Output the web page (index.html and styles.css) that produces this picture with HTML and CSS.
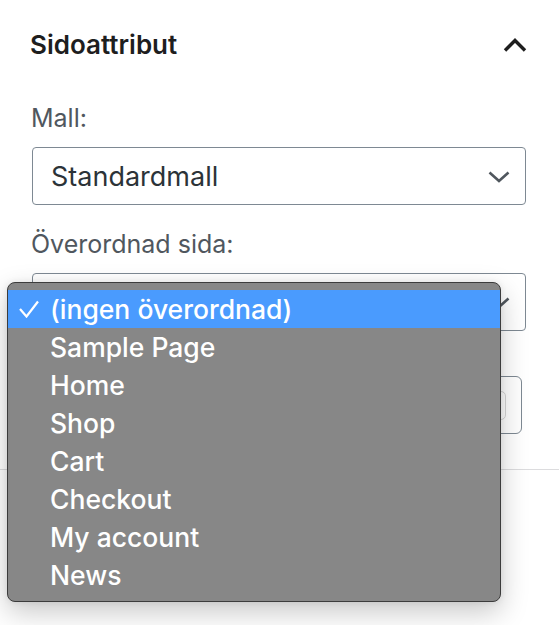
FILE: index.html
```html
<!DOCTYPE html>
<html lang="sv">
<head>
    <meta charset="UTF-8">
    <meta name="viewport" content="width=device-width, initial-scale=1.0">
    <title>Sidoattribut</title>
    <link rel="stylesheet" href="styles.css">
</head>
<body>
    <div class="panel">
        <div class="panel-header">
            <h2>Sidoattribut</h2>
            <svg class="toggle" width="24" height="16" viewBox="0 0 24 16">
                <polyline points="2,13.5 12,3.5 22,13.5" fill="none" stroke="#1e1e1e" stroke-width="3.4"/>
            </svg>
        </div>

        <label class="field-label">Mall:</label>
        <div class="select">
            <span>Standardmall</span>
            <svg class="arrow" width="22" height="12" viewBox="0 0 22 12">
                <polyline points="1.5,1.5 11,10 20.5,1.5" fill="none" stroke="#50575e" stroke-width="2.6"/>
            </svg>
        </div>

        <label class="field-label second">Överordnad sida:</label>
        <div class="select">
            <span></span>
            <svg class="arrow" width="22" height="12" viewBox="0 0 22 12">
                <polyline points="1.5,1.5 11,10 20.5,1.5" fill="none" stroke="#50575e" stroke-width="2.6"/>
            </svg>
        </div>

        <div class="number-input">
            <div class="spinner"></div>
        </div>
    </div>
    <div class="divider"></div>

    <!-- open native menu of the parent page select -->
    <ul class="menu">
        <li class="selected">
            <svg class="check" width="22" height="18" viewBox="0 0 22 18">
                <polyline points="2,9 8.5,16.5 20,1.5" fill="none" stroke="white" stroke-width="2.2"/>
            </svg>
            (ingen överordnad)
        </li>
        <li>Sample Page</li>
        <li>Home</li>
        <li>Shop</li>
        <li>Cart</li>
        <li>Checkout</li>
        <li>My account</li>
        <li>News</li>
    </ul>
</body>
</html>
```

FILE: styles.css
```css
body, html {
    margin: 0;
    background: white;
    font-family: Inter, 'Liberation Sans', sans-serif;
}
.panel {
    padding: 30px 33px 35px 30px;
}
.panel-header {
    display: flex;
    justify-content: space-between;
    align-items: center;
}
.panel-header h2 {
    margin: 0;
    font-size: 26px;
    line-height: 30px;
    font-weight: 600;
    color: #1e1e1e;
}
.toggle {
    margin-right: -1px;
    margin-top: -1px;
}
.field-label {
    display: block;
    margin-top: 43px;
    padding-left: 1px;
    font-size: 25px;
    line-height: 30px;
    color: #50575e;
}
.field-label.second {
    margin-top: 24px;
}
.select {
    margin: 14px 0 0 2px;
    height: 58px;
    box-sizing: border-box;
    border: 1px solid #7e8993;
    border-radius: 4px;
    display: flex;
    align-items: center;
    justify-content: space-between;
    padding: 0 15px 0 18px;
    font-size: 27px;
    color: #2c3338;
}
.arrow {
    margin-top: 1px;
}
.number-input {
    margin: 45px 4px 0 2px;
    height: 58px;
    box-sizing: border-box;
    border: 1.5px solid #7e8993;
    border-radius: 6px;
    display: flex;
    justify-content: flex-end;
    align-items: center;
    padding-right: 15px;
}
.spinner {
    width: 24px;
    height: 27px;
    border: 1px solid #d6d6d6;
    border-radius: 5px;
}
.divider {
    height: 1px;
    background: #dcdcde;
}
.menu {
    position: absolute;
    left: 7px;
    top: 282px;
    width: 494px;
    margin: 0;
    padding: 7px 0;
    box-sizing: border-box;
    list-style: none;
    background: #878787;
    border: 1px solid #3c3c3c;
    border-radius: 8px;
    box-shadow: 0 10px 28px rgba(0, 0, 0, 0.22), 0 0 6px rgba(0, 0, 0, 0.08);
}
.menu li {
    position: relative;
    height: 38px;
    line-height: 38px;
    padding-left: 42px;
    font-size: 26.5px;
    font-weight: 500;
    color: white;
    white-space: nowrap;
}
.menu li.selected {
    background: #4a9bfe;
}
.check {
    position: absolute;
    left: 10px;
    top: 10px;
}
```
